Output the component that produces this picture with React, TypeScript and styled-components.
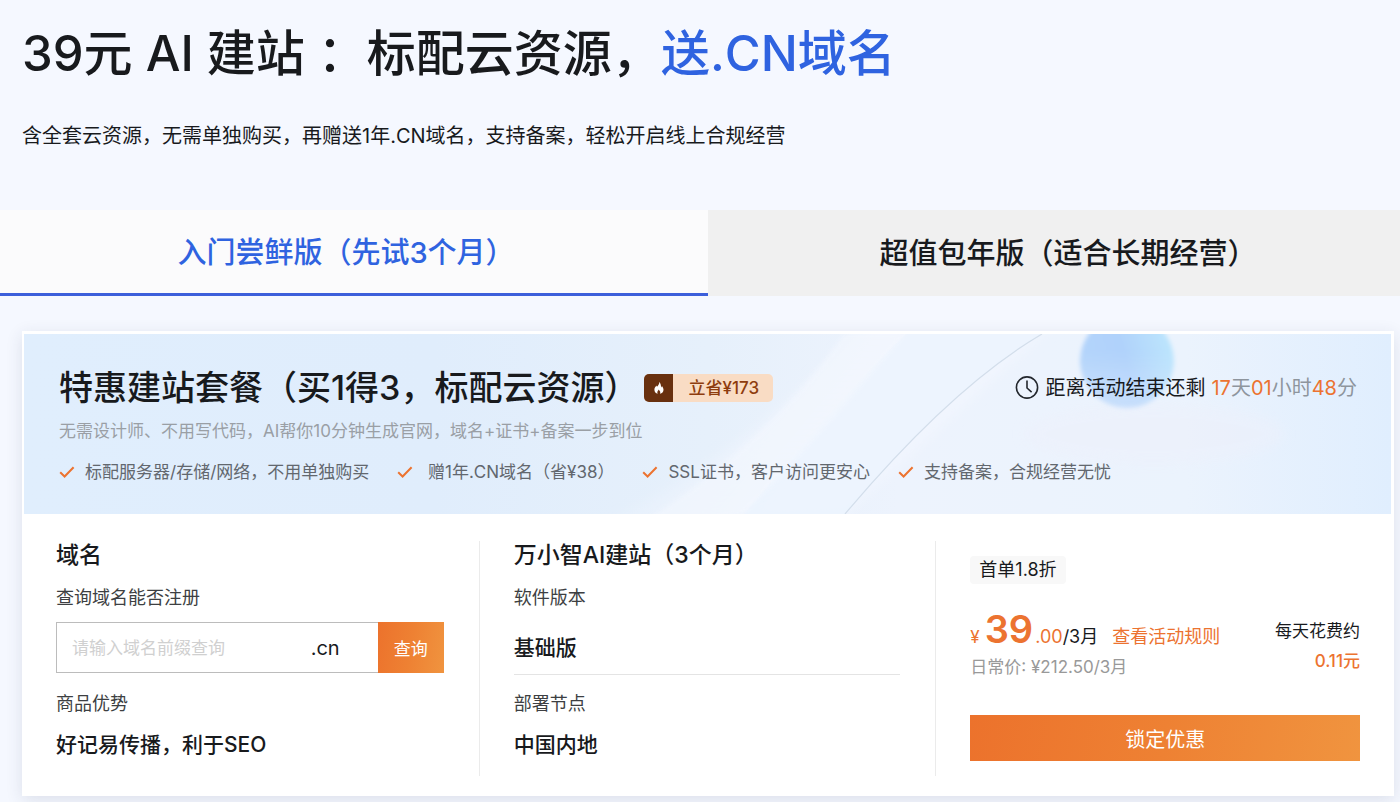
import React from "react";
import styled, { createGlobalStyle, css } from "styled-components";

const orange = "#ec7330";
const orangeFill = "linear-gradient(100deg, #ec722c 0%, #ee8133 50%, #f0943f 100%)";
const blue = "#2f63e0";
const ink = "#181a1d";

const GlobalStyle = createGlobalStyle`
  *, *::before, *::after { box-sizing: border-box; }
  body {
    margin: 0;
    background: #f5f8ff;
    color: ${ink};
    font-family: Inter, "Noto Sans CJK SC", sans-serif;
    font-size: 17px;
  }
  h1, h2, h3, p, ul { margin: 0; padding: 0; font-weight: inherit; }
  button, input { font: inherit; }
`;

const Page = styled.main`
  min-height: 100vh;
  overflow: hidden;
`;

const Header = styled.header`
  padding: 18px 22px 60px;
`;

const Title = styled.h1`
  font-size: 49px;
  line-height: 72px;
  font-weight: 500;
  em {
    font-style: normal;
    color: ${blue};
  }
`;

const Lead = styled.p`
  margin-top: 32px;
  font-size: 20px;
  line-height: 28px;
`;

const Tabs = styled.div`
  display: grid;
  grid-template-columns: 708fr 692fr;
`;

const Tab = styled.button<{ $active?: boolean }>`
  height: 86px;
  border: 0;
  font-size: 29px;
  font-weight: 500;
  cursor: pointer;
  ${({ $active }) =>
    $active
      ? css`
          padding: 0 16px 3px 0;
          background: #fbfbfc;
          color: ${blue};
          border-bottom: 3px solid #3c5fdb;
        `
      : css`
          padding: 0 0 5px 28px;
          background: #f0f0f0;
          color: ${ink};
        `}
`;

const Card = styled.section`
  margin: 35px 6px 6px 22px;
  background: #fff;
  box-shadow: 0 4px 16px rgba(40, 50, 80, 0.12);
`;

const Banner = styled.div`
  position: relative;
  margin: 0 3px 0 2px;
  border-top: 3px solid #fff;
  height: 183px;
  padding: 33px 34px 0 35px;
  overflow: hidden;
`;

const Scene = styled.svg`
  position: absolute;
  inset: 0;
  width: 100%;
  height: 100%;
`;

const BannerContent = styled.div`
  position: relative;
`;

const BannerTop = styled.div`
  display: flex;
  align-items: center;
  justify-content: space-between;
  height: 42px;
`;

const PlanTitle = styled.div`
  display: flex;
  align-items: center;
  gap: 6px;
  h2 {
    font-size: 34px;
    line-height: 42px;
    font-weight: 500;
  }
`;

const Badge = styled.span`
  display: flex;
  height: 28px;
  border-radius: 5px;
  overflow: hidden;
  background: #f9dcc4;
  color: #8e3c0e;
  font-weight: 500;
  line-height: 28px;
  i {
    display: flex;
    align-items: center;
    justify-content: center;
    width: 29px;
    background: #68300f;
  }
  b {
    padding: 0 14px 0 15px;
    font-weight: 500;
  }
`;

const Countdown = styled.p`
  display: flex;
  align-items: center;
  font-size: 20px;
  line-height: 28px;
  svg { margin-right: 6px; }
  time { margin-left: 6px; color: #8e959d; }
  b { font-weight: 400; color: ${orange}; }
`;

const PlanNote = styled.p`
  margin-top: 10px;
  line-height: 24px;
  color: #9a9fa5;
`;

const Features = styled.ul`
  display: flex;
  gap: 28px;
  margin-top: 17px;
  list-style: none;
  line-height: 24px;
  color: #62676e;
  white-space: pre;
  li {
    display: flex;
    align-items: center;
    gap: 10px;
  }
`;

const Columns = styled.div`
  display: grid;
  grid-template-columns: repeat(3, minmax(0, 1fr));
  padding: 27px 2px 20px 0;
`;

const Column = styled.div`
  height: 235px;
  padding: 0 35px 0 34px;
  & + & { border-left: 1px solid #ebebeb; }
  &:last-child { padding-right: 32px; }
`;

const ColumnTitle = styled.h3`
  font-size: 23px;
  line-height: 28px;
  font-weight: 500;
`;

const Label = styled.label`
  display: block;
  margin-top: 17px;
  font-size: 18px;
  line-height: 24px;
  color: #3d3f42;
`;

const Value = styled.p`
  margin-top: 15px;
  font-size: 21px;
  line-height: 28px;
  font-weight: 500;
`;

const ValueRow = styled(Value)`
  margin-top: 12px;
  padding: 12px 0;
  border-bottom: 1px solid #e4e4e4;
`;

const SearchForm = styled.form`
  display: flex;
  height: 51px;
  margin: 12px 0 19px;
`;

const SearchBox = styled.div`
  flex: 1;
  min-width: 0;
  display: flex;
  align-items: center;
  padding: 0 38px 0 15px;
  border: 1px solid #bcbcbc;
  border-right: 0;
  font-size: 20px;
  input {
    flex: 1;
    min-width: 0;
    padding: 0;
    border: 0;
    outline: 0;
    background: none;
    font-size: 17px;
  }
  input::placeholder { color: #d0d0d0; opacity: 1; }
`;

const FillButton = styled.button`
  border: 0;
  padding: 0;
  background: ${orangeFill};
  color: #fff;
  cursor: pointer;
`;

const SearchButton = styled(FillButton)`
  width: 66px;
`;

const BuyButton = styled(FillButton)`
  display: block;
  width: 100%;
  height: 46px;
  margin-top: 36px;
  font-size: 20px;
`;

const Tag = styled.span`
  display: inline-block;
  margin-top: 15px;
  padding: 0 9px;
  border-radius: 4px;
  background: #f8f8f8;
  font-size: 18px;
  line-height: 28px;
  vertical-align: top;
`;

const PriceRow = styled.div`
  display: flex;
  justify-content: space-between;
  margin-top: 23px;
  white-space: nowrap;
`;

const Price = styled.p`
  display: flex;
  align-items: baseline;
  height: 48px;
  font-size: 18px;
  line-height: 44px;
  color: ${orange};
  small { font-size: 17px; }
  b {
    margin: 0 2px 0 5px;
    font-size: 38px;
    font-weight: 600;
  }
  span { color: ${ink}; }
  a {
    margin-left: 14px;
    color: ${orange};
    text-decoration: none;
  }
`;

const ListPrice = styled.p`
  line-height: 24px;
  color: #999;
`;

const PerDay = styled.p`
  padding-top: 9px;
  line-height: 30px;
  text-align: right;
  b {
    display: block;
    font-weight: 500;
    color: ${orange};
  }
`;

const Check = () => (
  <svg width="16" height="14" viewBox="0 0 16 14" fill="none" aria-hidden="true">
    <path d="M1.2 7.2 5.6 11.5 14.6 2.2" stroke={orange} strokeWidth="2" />
  </svg>
);

const Flame = () => (
  <svg width="10" height="12" viewBox="0 0 10 12" aria-hidden="true">
    <path
      d="M5.2 0C5.6 2.2 4.2 3.2 3 4.8 2.7 4.5 2.6 4 2.6 3.5 1.2 4.8.4 6.2.4 7.7c0 2.2 1.4 3.6 3.3 4.1C2.9 10.6 3.3 9.2 4.9 7.6c.2 1 .8 1.3 1.2 2 .3.7.2 1.5-.1 2.2 2-.4 3.5-1.9 3.5-4 0-1.7-.8-2.9-1.6-3.9-.1.7-.3 1.1-.8 1.5C7 3.2 6.6 1.1 5.2 0Z"
      fill="#fff"
    />
  </svg>
);

const Clock = () => (
  <svg width="24" height="24" viewBox="0 0 24 24" fill="none" stroke="#23272d" strokeWidth="1.6" aria-hidden="true">
    <circle cx="12" cy="11.5" r="10.6" />
    <path d="M12 4.5v7.5l4.6 4.2" />
  </svg>
);

const BannerScene = () => (
  <Scene viewBox="0 0 1367 180" preserveAspectRatio="xMaxYMid slice" aria-hidden="true">
    <defs>
      <linearGradient id="sky" x1="0" y1="0" x2="1" y2="0">
        <stop offset="0" stopColor="#e0eefd" />
        <stop offset="0.3" stopColor="#e0edfc" />
        <stop offset="0.5" stopColor="#e6f0fb" />
        <stop offset="0.64" stopColor="#edf3fd" />
        <stop offset="0.85" stopColor="#ebf3fd" />
        <stop offset="1" stopColor="#e0eefe" />
      </linearGradient>
      <linearGradient id="beam" gradientUnits="userSpaceOnUse" x1="640" y1="60" x2="760" y2="160">
        <stop offset="0" stopColor="#f2f6fe" stopOpacity="0" />
        <stop offset="1" stopColor="#f2f6fe" stopOpacity="0.8" />
      </linearGradient>
      <linearGradient id="orb" x1="0" y1="0.3" x2="1" y2="0">
        <stop offset="0" stopColor="#b3d4fb" />
        <stop offset="0.4" stopColor="#b0d2fb" />
        <stop offset="1" stopColor="#bfeafe" />
      </linearGradient>
      <linearGradient id="fade" x1="0" y1="0" x2="0" y2="1">
        <stop offset="0.4" stopColor="#fff" />
        <stop offset="1" stopColor="#fff" stopOpacity="0.6" />
      </linearGradient>
      <mask id="orbMask">
        <circle cx="1103" cy="27" r="47" fill="url(#fade)" />
      </mask>
      <filter id="soft" x="-20%" y="-20%" width="140%" height="140%">
        <feGaussianBlur stdDeviation="2" />
      </filter>
      <filter id="haze" x="-20%" y="-20%" width="140%" height="140%">
        <feGaussianBlur stdDeviation="6" />
      </filter>
    </defs>
    <rect width="1367" height="180" fill="url(#sky)" />
    <path d="M560 200C690 140 780 60 850 -20H1040L821 180Z" fill="url(#beam)" filter="url(#haze)" />
    <path d="M720 180C780 110 820 60 882 0H1018C950 40 880 110 821 180Z" fill="#ebf3fd" opacity="0.7" />
    <path d="M600 200C700 140 770 70 820 0H882C830 60 780 120 720 180Z" fill="#f4f8fe" opacity="0.5" filter="url(#soft)" />
    <path d="M821 180C880 110 950 40 1018 0" fill="none" stroke="#d3deeb" strokeWidth="1.2" />
    <ellipse cx="1130" cy="100" rx="130" ry="30" fill="#edf0fb" opacity="0.5" filter="url(#haze)" />
    <g filter="url(#soft)">
      <circle cx="1103" cy="27" r="47" fill="url(#orb)" mask="url(#orbMask)" />
    </g>
  </Scene>
);

const features = [
  "标配服务器/存储/网络，不用单独购买",
  " 赠1年.CN域名（省¥38）",
  "SSL证书，客户访问更安心",
  "支持备案，合规经营无忧",
];

export default function App() {
  return (
    <Page lang="zh-CN">
      <GlobalStyle />
      <Header>
        <Title>
          39元 AI 建站 ：标配云资源，<em>送.CN域名</em>
        </Title>
        <Lead>含全套云资源，无需单独购买，再赠送1年.CN域名，支持备案，轻松开启线上合规经营</Lead>
      </Header>

      <Tabs role="tablist">
        <Tab type="button" role="tab" aria-selected="true" $active>
          入门尝鲜版（先试3个月）
        </Tab>
        <Tab type="button" role="tab" aria-selected="false">
          超值包年版（适合长期经营）
        </Tab>
      </Tabs>

      <Card>
        <Banner>
          <BannerScene />
          <BannerContent>
            <BannerTop>
              <PlanTitle>
                <h2>特惠建站套餐（买1得3，标配云资源）</h2>
                <Badge>
                  <i>
                    <Flame />
                  </i>
                  <b>立省¥173</b>
                </Badge>
              </PlanTitle>
              <Countdown>
                <Clock />
                距离活动结束还剩
                <time>
                  <b>17</b>天<b>01</b>小时<b>48</b>分
                </time>
              </Countdown>
            </BannerTop>
            <PlanNote>无需设计师、不用写代码，AI帮你10分钟生成官网，域名+证书+备案一步到位</PlanNote>
            <Features>
              {features.map((text) => (
                <li key={text}>
                  <Check />
                  <span>{text}</span>
                </li>
              ))}
            </Features>
          </BannerContent>
        </Banner>

        <Columns>
          <Column>
            <ColumnTitle>域名</ColumnTitle>
            <Label htmlFor="domain">查询域名能否注册</Label>
            <SearchForm onSubmit={(event) => event.preventDefault()}>
              <SearchBox>
                <input id="domain" type="text" placeholder="请输入域名前缀查询" />
                <span>.cn</span>
              </SearchBox>
              <SearchButton type="submit">查询</SearchButton>
            </SearchForm>
            <Label as="p">商品优势</Label>
            <Value>好记易传播，利于SEO</Value>
          </Column>

          <Column>
            <ColumnTitle>万小智AI建站（3个月）</ColumnTitle>
            <Label as="p">软件版本</Label>
            <ValueRow>基础版</ValueRow>
            <Label as="p">部署节点</Label>
            <Value>中国内地</Value>
          </Column>

          <Column>
            <Tag>首单1.8折</Tag>
            <PriceRow>
              <div>
                <Price>
                  <small>¥</small>
                  <b>39</b>.00<span>/3月</span>
                  <a href="#rules">查看活动规则</a>
                </Price>
                <ListPrice>日常价: ¥212.50/3月</ListPrice>
              </div>
              <PerDay>
                每天花费约
                <b>0.11元</b>
              </PerDay>
            </PriceRow>
            <BuyButton type="button">锁定优惠</BuyButton>
          </Column>
        </Columns>
      </Card>
    </Page>
  );
}
